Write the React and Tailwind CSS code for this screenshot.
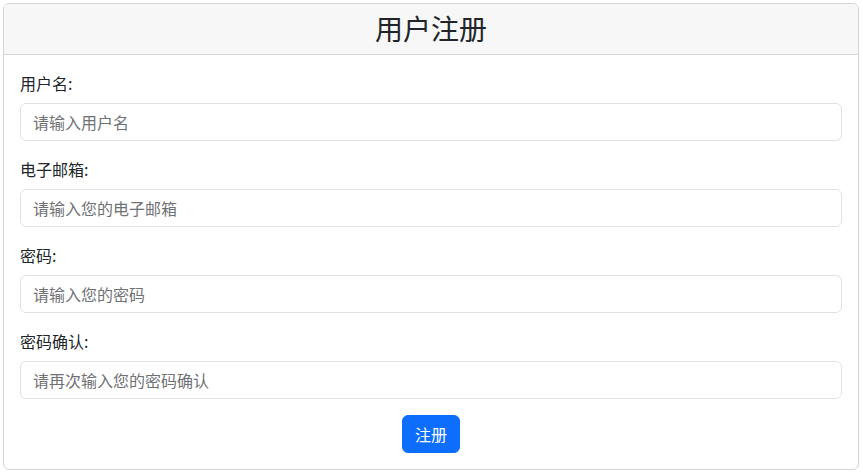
export default function App() {
  const font = { fontFamily: '"Microsoft YaHei", "Noto Sans CJK SC", "Noto Sans", sans-serif' };
  const fields = [
    { label: "用户名:", ph: "请输入用户名", type: "text" },
    { label: "电子邮箱:", ph: "请输入您的电子邮箱", type: "email" },
    { label: "密码:", ph: "请输入您的密码", type: "password" },
    { label: "密码确认:", ph: "请再次输入您的密码确认", type: "password" },
  ];
  return (
    <div className="bg-white min-h-[474px] pt-[3px] pl-[3px] pr-[4px] font-['Noto_Sans_CJK_SC',sans-serif]" style={font}>
      <div className="border border-[#d3d4d5] rounded-[6px] overflow-hidden text-[#212529]">
        <div className="bg-[#f7f7f7] border-b border-[#d3d4d5] py-2 px-4 text-center">
          <h3 className="text-[28px] leading-[1.2] font-normal m-0">用户注册</h3>
        </div>
        <div className="p-4">
          {fields.map((f) => (
            <div key={f.label} className="mb-4">
              <label className="block mb-2 text-[16px] leading-6">{f.label}</label>
              <input
                type={f.type}
                placeholder={f.ph}
                className="block w-full h-[38px] px-3 py-[6px] text-[16px] leading-6 border border-[#dee2e6] rounded-[6px] bg-white placeholder:text-[#6f7275] outline-none"
              />
            </div>
          ))}
          <div className="flex justify-center">
            <button className="bg-[#0d6efd] text-white text-[16px] leading-6 px-3 py-[6px] border border-[#0d6efd] rounded-[6px]">
              注册
            </button>
          </div>
        </div>
      </div>
    </div>
  );
}
